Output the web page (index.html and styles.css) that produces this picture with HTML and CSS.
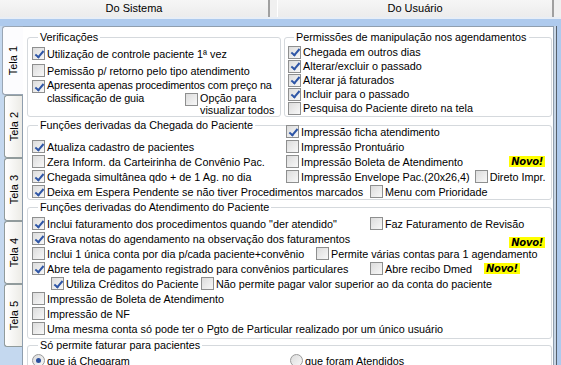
FILE: index.html
```html
<!DOCTYPE html>
<html lang="pt-BR">
<head>
    <meta charset="UTF-8">
    <title>Configurações</title>
    <link rel="stylesheet" href="styles.css">
</head>
<body>
    <div class="top-tabs">
        <div class="ttab">Do Sistema</div>
        <div class="ttab">Do Usuário</div>
    </div>
    <div class="band"></div>
    <div class="main">
        <div class="side-tabs">
            <div class="stab active"><span>Tela 1</span></div>
            <div class="stab"><span>Tela 2</span></div>
            <div class="stab"><span>Tela 3</span></div>
            <div class="stab"><span>Tela 4</span></div>
            <div class="stab"><span>Tela 5</span></div>
        </div>
        <div class="panel">
            <div class="top-row">
                <div class="grp grp-verif">
                    <div class="cap">Verificações</div>
                    <div class="chk r1"><span class="cb on"></span>Utilização de controle paciente 1ª vez</div>
                    <div class="chk r2"><span class="cb"></span>Pemissão p/ retorno pelo tipo atendimento</div>
                    <div class="chk multi"><span class="cb on"></span><span class="tight">Apresenta apenas procedimentos com preço na<br>classificação de guia</span></div>
                    <div class="chk multi opt"><span class="cb"></span><span>Opção para<br>visualizar todos</span></div>
                </div>
                <div class="grp grp-perm">
                    <div class="cap">Permissões de manipulação nos agendamentos</div>
                    <div class="list">
                        <div class="chk"><span class="cb on"></span>Chegada em outros dias</div>
                        <div class="chk"><span class="cb on"></span>Alterar/excluir o passado</div>
                        <div class="chk"><span class="cb on"></span>Alterar já faturados</div>
                        <div class="chk"><span class="cb on"></span>Incluir para o passado</div>
                        <div class="chk"><span class="cb"></span>Pesquisa do Paciente direto na tela</div>
                    </div>
                </div>
            </div>

            <div class="grp grp-chegada">
                <div class="cap">Funções derivadas da Chegada do Paciente</div>
                <div class="grid2">
                    <div></div>
                    <div class="chk"><span class="cb on"></span>Impressão ficha atendimento</div>
                    <div class="chk"><span class="cb on"></span>Atualiza cadastro de pacientes</div>
                    <div class="chk"><span class="cb"></span>Impressão Prontuário</div>
                    <div class="chk"><span class="cb"></span>Zera Inform. da Carteirinha de Convênio Pac.</div>
                    <div class="line">
                        <div class="chk"><span class="cb"></span>Impressão Boleta de Atendimento</div>
                        <span class="novo novo-boleta">Novo!</span>
                    </div>
                    <div class="chk"><span class="cb on"></span>Chegada simultânea qdo + de 1 Ag. no dia</div>
                    <div class="line">
                        <div class="chk"><span class="cb"></span>Impressão Envelope Pac.(20x26,4)</div>
                        <div class="chk direto"><span class="cb"></span>Direto Impr.</div>
                    </div>
                    <div class="line span2">
                        <div class="chk w338"><span class="cb on"></span>Deixa em Espera Pendente se não tiver Procedimentos marcados</div>
                        <div class="chk"><span class="cb"></span>Menu com Prioridade</div>
                    </div>
                </div>
            </div>

            <div class="grp grp-atend">
                <div class="cap">Funções derivadas do Atendimento do Paciente</div>
                <div class="rows">
                    <div class="line">
                        <div class="chk w338"><span class="cb on"></span>Inclui faturamento dos procedimentos quando "der atendido"</div>
                        <div class="chk"><span class="cb"></span>Faz Faturamento de Revisão</div>
                    </div>
                    <div class="line">
                        <div class="chk"><span class="cb on"></span>Grava notas do agendamento na observação dos faturamentos</div>
                        <span class="novo novo-grava">Novo!</span>
                    </div>
                    <div class="line">
                        <div class="chk w284"><span class="cb"></span>Inclui 1 única conta por dia p/cada paciente+convênio</div>
                        <div class="chk"><span class="cb"></span>Permite várias contas para 1 agendamento</div>
                    </div>
                    <div class="line">
                        <div class="chk w338"><span class="cb on"></span>Abre tela de pagamento registrado para convênios particulares</div>
                        <div class="chk"><span class="cb"></span>Abre recibo Dmed</div>
                        <span class="novo novo-dmed">Novo!</span>
                    </div>
                    <div class="line indent">
                        <div class="chk w150"><span class="cb on"></span>Utiliza Créditos do Paciente</div>
                        <div class="chk"><span class="cb"></span>Não permite pagar valor superior ao da conta do paciente</div>
                    </div>
                    <div class="chk"><span class="cb"></span>Impressão de Boleta de Atendimento</div>
                    <div class="chk"><span class="cb"></span>Impressão de NF</div>
                    <div class="chk"><span class="cb"></span>Uma mesma conta só pode ter o Pgto de Particular realizado por um único usuário</div>
                </div>
            </div>

            <div class="grp grp-fatura">
                <div class="cap">Só permite faturar para pacientes</div>
                <div class="line radios">
                    <div class="chk w258"><span class="rb on"></span>que já Chegaram</div>
                    <div class="chk"><span class="rb"></span>que foram Atendidos</div>
                </div>
            </div>
        </div>
        <div class="edge"></div>
    </div>
</body>
</html>
```

FILE: styles.css
```css
body {
    margin: 0;
    width: 561px;
    height: 365px;
    overflow: hidden;
    background: #aecaed;
    font-family: "Liberation Sans", Arial, sans-serif;
    font-size: 10.8px;
    color: #000;
}

/* top tabs */
.top-tabs {
    display: flex;
    height: 17px;
    background: #f0f0f0;
}
.ttab {
    height: 17px;
    line-height: 17px;
    text-align: center;
    background: linear-gradient(#f6f6f6, #ececec);
    border-right: 2px solid #a0a0a0;
    font-size: 11px;
}
.ttab:first-child {
    width: 268px;
    margin-right: 7px;
}
.ttab:last-child {
    width: 274px;
    border-left: 1px solid #ffffff;
}
.band {
    height: 9px;
    border-top: 2px solid #e8eef6;
    box-sizing: border-box;
    background: #aecaed;
}

/* body */
.main {
    display: flex;
    height: 339px;
}
.side-tabs {
    width: 22px;
    display: flex;
    flex-direction: column;
    background: #c4d8ef;
}
.stab {
    height: 63px;
    margin-left: 4px;
    box-sizing: border-box;
    border: 1px solid #919b9c;
    border-right: none;
    border-radius: 3px 0 0 3px;
    background: linear-gradient(to right, #ffffff, #ecebe6);
    display: flex;
    align-items: center;
    justify-content: center;
}
.stab span {
    writing-mode: vertical-rl;
    transform: rotate(180deg);
    font-size: 11px;
}
.stab.active {
    height: 69px;
    margin-left: 2px;
    margin-right: -1px;
    background: #fcfcfe;
    position: relative;
    z-index: 1;
    border-color: #9aa6b4;
}
.panel {
    width: 532px;
    box-sizing: border-box;
    background: #fff;
    border: 1px solid #8f9eae;
    border-bottom: none;
    padding: 3px 1px 0 4px;
}
.edge {
    width: 7px;
    border-left: 2px solid #c8d6e6;
    box-sizing: border-box;
    background: linear-gradient(to right, #55606c 0, #55606c 1px, #aecaed 1px);
}

/* group boxes */
.grp {
    border: 1px solid #d5d9dd;
    border-radius: 3px;
    box-sizing: border-box;
}
.cap {
    display: table;
    background: #fff;
    line-height: 13px;
    margin: -7px 0 0 6px;
    padding: 0 2px;
}
.top-row {
    display: flex;
    gap: 3px;
    margin-top: 7px;
}
.grp-verif {
    width: 255px;
    height: 80px;
    padding: 0 4px;
}
.grp-perm {
    width: 269px;
    height: 80px;
    padding: 0 3px;
}
.grp-chegada {
    margin-top: 8px;
    height: 75px;
    padding: 0 4px;
}
.grp-atend {
    margin-top: 7px;
    height: 132px;
    padding: 0 4px;
}
.grp-fatura {
    margin-top: 6px;
    height: 30px;
    padding: 0 4px;
}

/* checkboxes */
.chk {
    display: flex;
    align-items: center;
    height: 15px;
    white-space: nowrap;
}
.cb, .rb {
    flex: none;
    width: 13px;
    height: 13px;
    box-sizing: border-box;
    border: 1px solid #8e8f8f;
    background: linear-gradient(135deg, #dcdcdc, #f8f8f8);
    margin-right: 2px;
    position: relative;
}
.cb.on::after {
    content: "";
    position: absolute;
    left: 3.5px;
    top: 0.5px;
    width: 3px;
    height: 7px;
    border: solid #2f56a6;
    border-width: 0 2px 2px 0;
    transform: rotate(40deg);
}
.rb {
    border-radius: 50%;
    border-color: #9a9a9a;
}
.rb.on::after {
    content: "";
    position: absolute;
    left: 3px;
    top: 3px;
    width: 5px;
    height: 5px;
    border-radius: 50%;
    background: #2a4f9e;
}

.grp-verif .r1 { margin-top: 2px; }
.grp-verif .r2 { margin-top: 2px; }
.chk.multi {
    align-items: flex-start;
    height: auto;
    white-space: nowrap;
    line-height: 13px;
    margin-top: 1px;
}
.chk.multi .cb { margin-top: 1px; }
.tight { letter-spacing: -0.12px; }
.chk.opt {
    margin-top: -13px;
    margin-left: 153px;
    line-height: 12px;
}
.grp-perm .list {
    margin-top: 1px;
    display: flex;
    flex-direction: column;
}
.grp-perm .chk { height: 14px; }

.grid2 {
    display: grid;
    grid-template-columns: 254px 1fr;
    margin-top: -8px;
}
.span2 { grid-column: 1 / 3; }
.line {
    display: flex;
    align-items: center;
    height: 15px;
}
.direto { margin-left: 5px; }

.rows {
    margin-top: 2px;
}
.w338 { width: 338px; }
.w284 { width: 284px; }
.w150 { width: 150px; }
.w258 { width: 258px; }
.indent { padding-left: 19px; }

.radios { margin-top: 1px; }

/* badge */
.novo {
    display: inline-block;
    background: #ffff00;
    font-family: "DejaVu Sans", sans-serif;
    font-weight: bold;
    font-style: italic;
    font-size: 10px;
    line-height: 11px;
    padding: 0 2px;
    letter-spacing: -0.3px;
}
.novo-boleta { margin-left: auto; margin-right: 2px; }
.novo-grava { margin-left: auto; margin-right: 2px; position: relative; top: 4px; }
.novo-dmed { margin-left: 12px; }
```
